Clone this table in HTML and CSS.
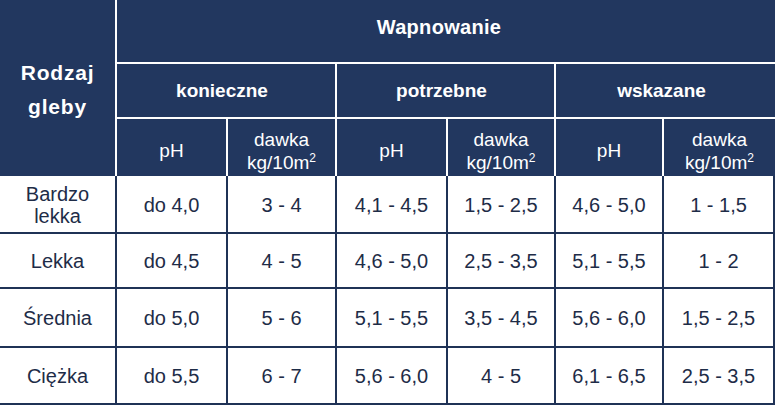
FILE: index.html
```html
<!DOCTYPE html>
<html lang="pl">
<head>
<meta charset="utf-8">
<title>Wapnowanie</title>
<link rel="stylesheet" href="styles.css">
</head>
<body>
<div class="grid">
  <div class="h h-soil"><span>Rodzaj<br>gleby</span></div>
  <div class="h h-title"><span>Wapnowanie</span></div>
  <div class="h h-group g1"><span>konieczne</span></div>
  <div class="h h-group g2"><span>potrzebne</span></div>
  <div class="h h-group g3 last"><span>wskazane</span></div>
  <div class="h h-sub"><span>pH</span></div>
  <div class="h h-sub"><span>dawka<br>kg/10m<sup>2</sup></span></div>
  <div class="h h-sub"><span>pH</span></div>
  <div class="h h-sub"><span>dawka<br>kg/10m<sup>2</sup></span></div>
  <div class="h h-sub"><span>pH</span></div>
  <div class="h h-sub last"><span>dawka<br>kg/10m<sup>2</sup></span></div>

  <div class="c first"><span>Bardzo<br>lekka</span></div>
  <div class="c"><span>do 4,0</span></div><div class="c"><span>3 - 4</span></div>
  <div class="c"><span>4,1 - 4,5</span></div><div class="c"><span>1,5 - 2,5</span></div>
  <div class="c"><span>4,6 - 5,0</span></div><div class="c"><span>1 - 1,5</span></div>

  <div class="c first"><span>Lekka</span></div>
  <div class="c"><span>do 4,5</span></div><div class="c"><span>4 - 5</span></div>
  <div class="c"><span>4,6 - 5,0</span></div><div class="c"><span>2,5 - 3,5</span></div>
  <div class="c"><span>5,1 - 5,5</span></div><div class="c"><span>1 - 2</span></div>

  <div class="c first"><span>Średnia</span></div>
  <div class="c"><span>do 5,0</span></div><div class="c"><span>5 - 6</span></div>
  <div class="c"><span>5,1 - 5,5</span></div><div class="c"><span>3,5 - 4,5</span></div>
  <div class="c"><span>5,6 - 6,0</span></div><div class="c"><span>1,5 - 2,5</span></div>

  <div class="c first"><span>Ciężka</span></div>
  <div class="c"><span>do 5,5</span></div><div class="c"><span>6 - 7</span></div>
  <div class="c"><span>5,6 - 6,0</span></div><div class="c"><span>4 - 5</span></div>
  <div class="c"><span>6,1 - 6,5</span></div><div class="c"><span>2,5 - 3,5</span></div>
</div>
</body>
</html>
```

FILE: styles.css
```css
html, body {
  margin: 0;
  padding: 0;
  background: #ffffff;
}

body {
  font-family: "Liberation Sans", Arial, sans-serif;
  width: 775px;
  height: 407px;
  overflow: hidden;
}

.grid {
  display: grid;
  grid-template-columns: 117px 111px 109px 111px 108px 108px 111px;
  grid-template-rows: 64px 55px 57px 58px 55px 59px 57px;
}

.grid > div {
  box-sizing: border-box;
  display: flex;
  align-items: center;
  justify-content: center;
  text-align: center;
}

.h {
  background: #22375f;
  color: #ffffff;
}

.h-soil {
  grid-column: 1;
  grid-row: 1 / span 3;
  border-right: 2px solid #ffffff;
  font-weight: bold;
  font-size: 21px;
  line-height: 34px;
  letter-spacing: 0.8px;
  padding-top: 4px;
}

.h-title {
  grid-column: 2 / span 6;
  border-bottom: 2px solid #ffffff;
  font-weight: bold;
  font-size: 20px;
  letter-spacing: 0.3px;
  padding-right: 14px;
  padding-bottom: 7px;
}

.h-group {
  border-right: 2px solid #ffffff;
  border-bottom: 2px solid #ffffff;
  font-weight: bold;
  font-size: 19px;
  padding-right: 8px;
}

.g1 { grid-column: 2 / span 2; }
.g2 { grid-column: 4 / span 2; }
.g3 { grid-column: 6 / span 2; }

.h-sub {
  border-right: 2px solid #ffffff;
  font-size: 19px;
  line-height: 23px;
  padding-top: 6px;
}

.h.last {
  border-right: none;
}

sup {
  font-size: 12px;
  line-height: 0;
  vertical-align: 7px;
}

.c {
  color: #1e2c47;
  font-size: 20px;
  line-height: 22px;
  border-right: 2px solid #1f3256;
  border-bottom: 2px solid #1f3256;
  padding-top: 1px;
}
```
